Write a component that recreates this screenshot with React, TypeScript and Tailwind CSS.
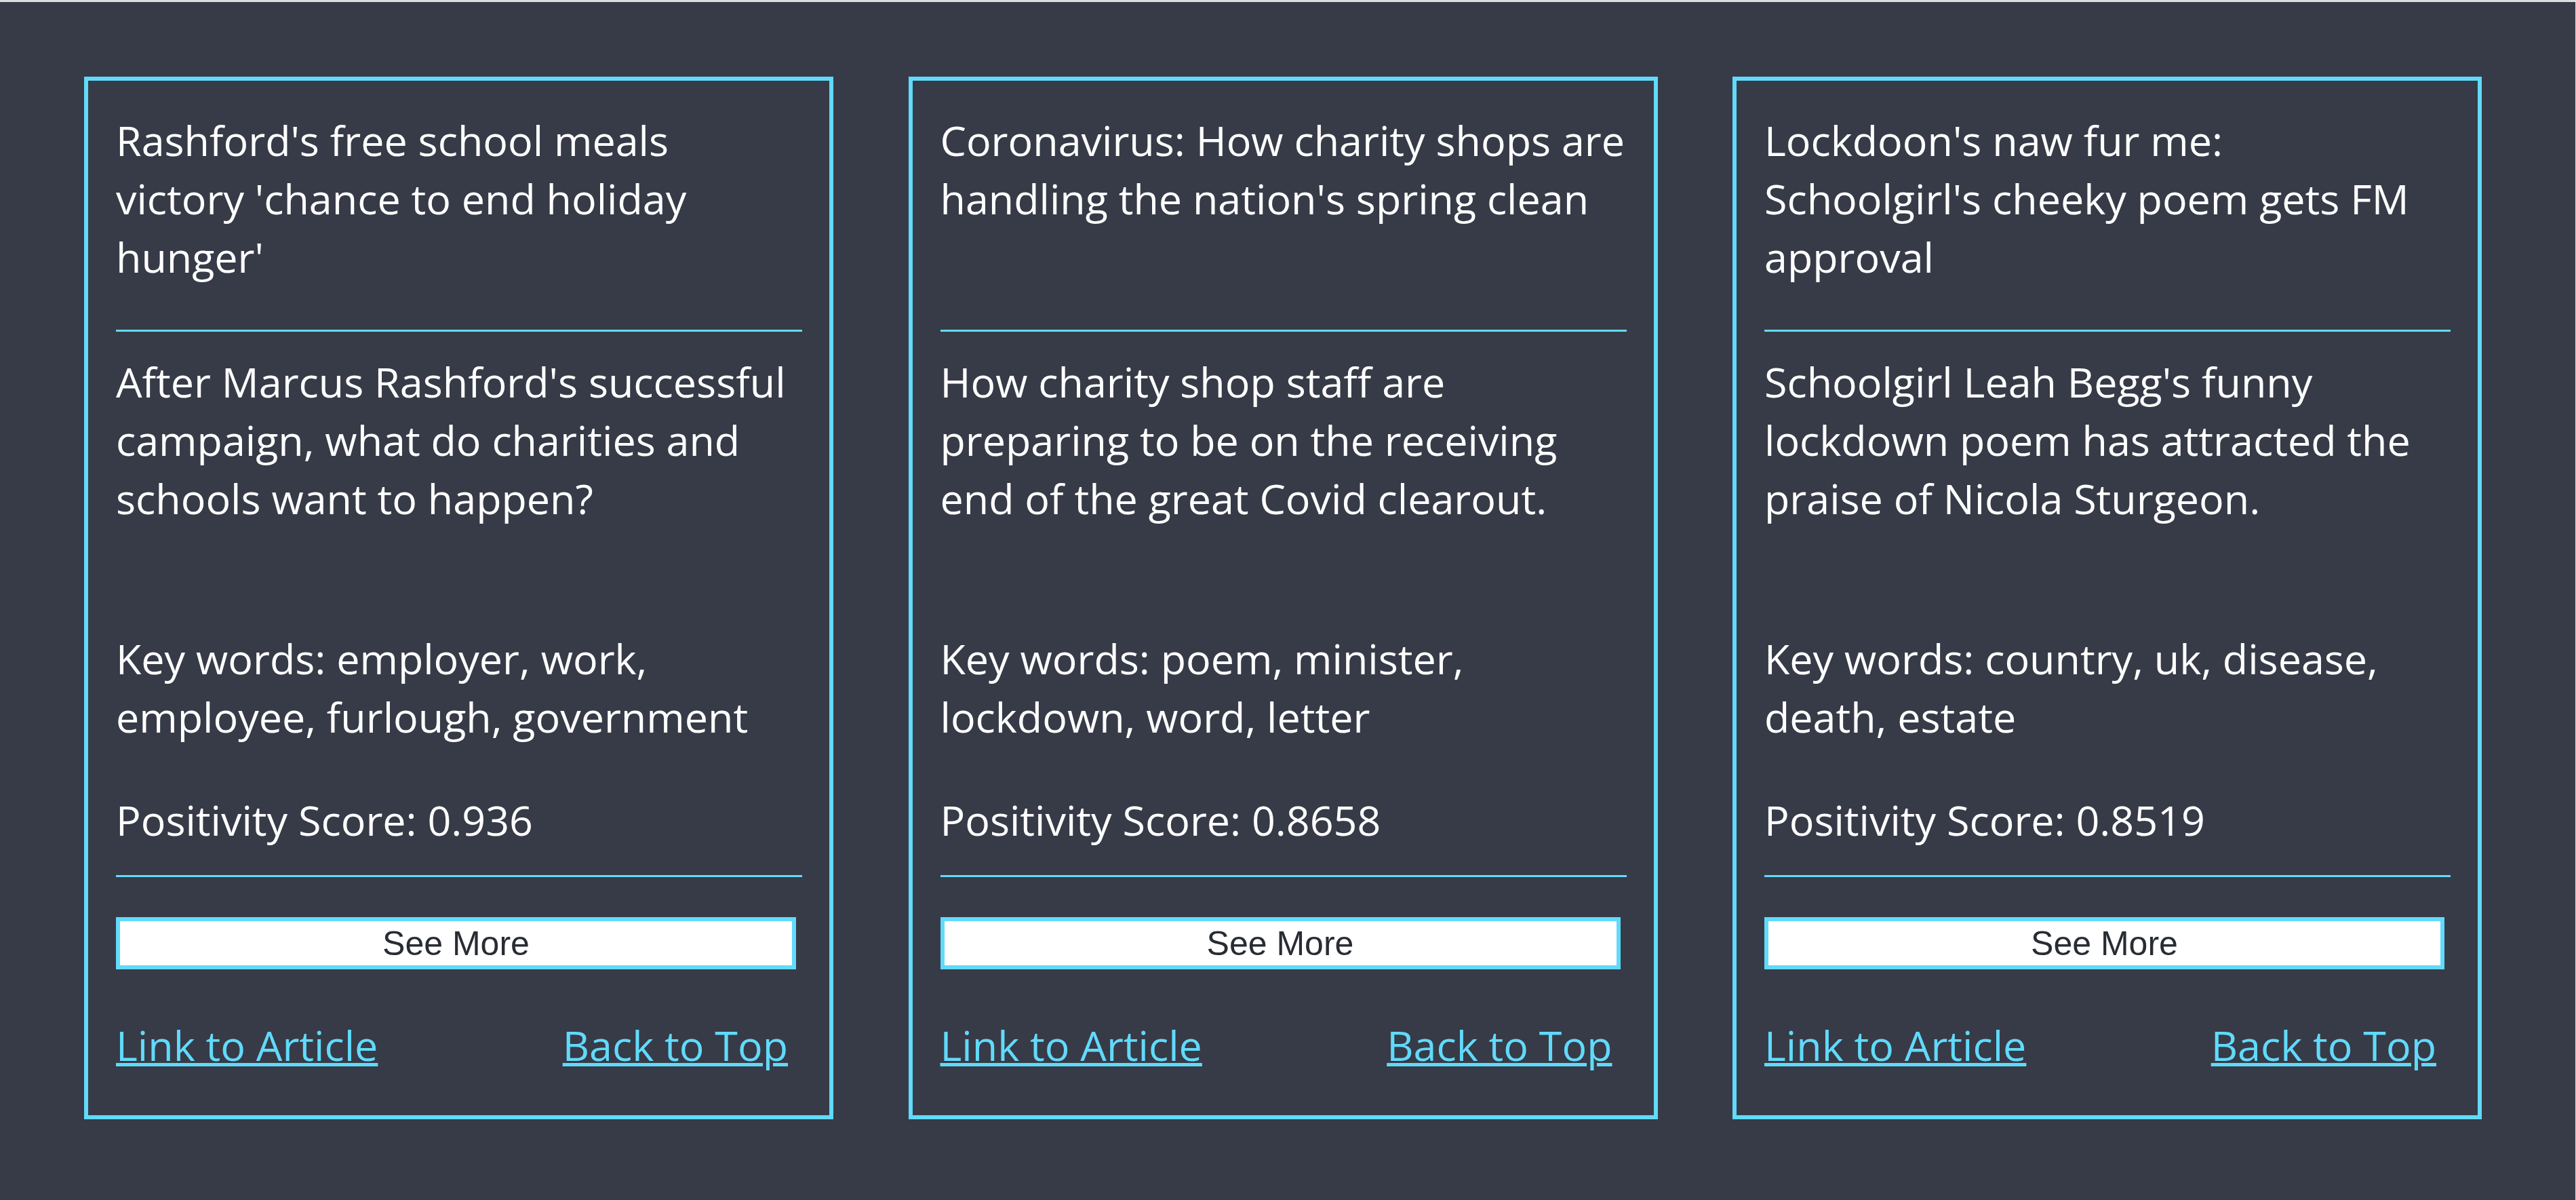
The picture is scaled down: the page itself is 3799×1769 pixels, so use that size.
// lines are kept as in the original layout so wrapping doesn't depend on the fallback font
const articles = [
  {
    title: ["Rashford's free school meals", "victory 'chance to end holiday", "hunger'"],
    summary: ["After Marcus Rashford's successful", "campaign, what do charities and", "schools want to happen?"],
    keywords: ["Key words: employer, work,", "employee, furlough, government"],
    score: "0.936",
  },
  {
    title: ["Coronavirus: How charity shops are", "handling the nation's spring clean"],
    summary: ["How charity shop staff are", "preparing to be on the receiving", "end of the great Covid clearout."],
    keywords: ["Key words: poem, minister,", "lockdown, word, letter"],
    score: "0.8658",
  },
  {
    title: ["Lockdoon's naw fur me:", "Schoolgirl's cheeky poem gets FM", "approval"],
    summary: ["Schoolgirl Leah Begg's funny", "lockdown poem has attracted the", "praise of Nicola Sturgeon."],
    keywords: ["Key words: country, uk, disease,", "death, estate"],
    score: "0.8519",
  },
]

type Article = (typeof articles)[number]

function Lines({ lines }: { lines: string[] }) {
  return (
    <>
      {lines.map((line) => (
        <span key={line} className="block whitespace-nowrap">{line}</span>
      ))}
    </>
  )
}

function ArticleCard({ article }: { article: Article }) {
  return (
    <div className="w-[1105px] shrink-0 border-[6px] border-[#61dafb] pt-[45px] pb-[60px] pl-[41px] pr-[40px] flex flex-col">
      <h2 className="h-[322px] font-normal">
        <Lines lines={article.title} />
      </h2>
      <div className="h-[3px] bg-[#61dafb]" />
      <p className="mt-[31px] h-[408px]">
        <Lines lines={article.summary} />
      </p>
      <p className="h-[172px]">
        <Lines lines={article.keywords} />
      </p>
      <p className="mt-[66px] whitespace-nowrap">{`Positivity Score: ${article.score}`}</p>
      <div className="mt-[38px] h-[3px] bg-[#61dafb]" />
      <button className="mt-[59px] w-[1003px] h-[77px] border-[6px] border-[#61dafb] bg-white text-[#282c34] text-[50px] leading-none font-['Liberation_Sans',Arial,sans-serif] cursor-pointer">
        See More
      </button>
      <div className="mt-[69px] flex justify-between pr-[21px] text-[#61dafb]">
        <a href="#" className="underline decoration-[5px] underline-offset-[3px]">Link to Article</a>
        <a href="#" className="underline decoration-[5px] underline-offset-[3px]">Back to Top</a>
      </div>
    </div>
  )
}

export default function App() {
  return (
    <div className="min-h-screen bg-[#373b47] border-t-[3px] border-r border-[#dcdde1] pt-[110px] pl-[124px] text-white text-[61px] leading-[86px] font-['Open_Sans',sans-serif]">
      <div className="flex gap-[110.5px]">
        {articles.map((article) => (
          <ArticleCard key={article.score} article={article} />
        ))}
      </div>
    </div>
  )
}
